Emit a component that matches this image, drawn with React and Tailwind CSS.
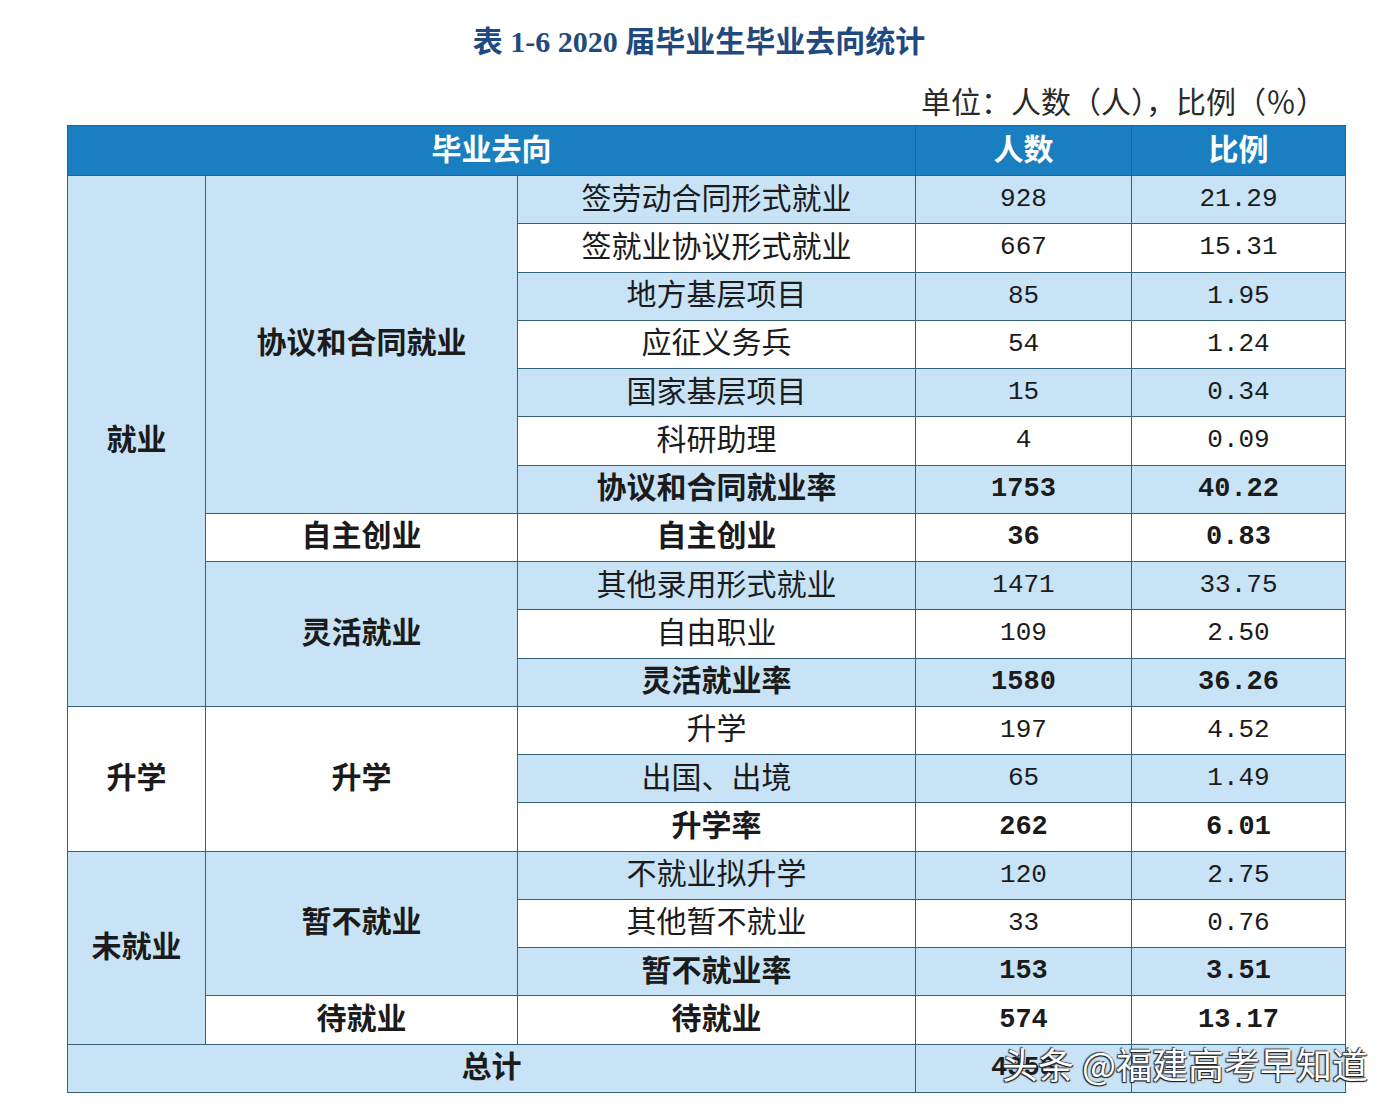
import React from 'react'

const BLUE = 'bg-[#c8e3f6]'
const WHITE = 'bg-white'

// col3 / count / ratio / bold
const rows = [
  ['签劳动合同形式就业', '928', '21.29', false],
  ['签就业协议形式就业', '667', '15.31', false],
  ['地方基层项目', '85', '1.95', false],
  ['应征义务兵', '54', '1.24', false],
  ['国家基层项目', '15', '0.34', false],
  ['科研助理', '4', '0.09', false],
  ['协议和合同就业率', '1753', '40.22', true],
  ['自主创业', '36', '0.83', true],
  ['其他录用形式就业', '1471', '33.75', false],
  ['自由职业', '109', '2.50', false],
  ['灵活就业率', '1580', '36.26', true],
  ['升学', '197', '4.52', false],
  ['出国、出境', '65', '1.49', false],
  ['升学率', '262', '6.01', true],
  ['不就业拟升学', '120', '2.75', false],
  ['其他暂不就业', '33', '0.76', false],
  ['暂不就业率', '153', '3.51', true],
  ['待就业', '574', '13.17', true],
]

// first column groups, keyed by starting row
const groups = {
  0: { label: '就业', span: 11, bg: BLUE },
  11: { label: '升学', span: 3, bg: WHITE },
  14: { label: '未就业', span: 4, bg: BLUE },
}

// second column groups
const subGroups = {
  0: { label: '协议和合同就业', span: 7, bg: BLUE },
  7: { label: '自主创业', span: 1, bg: WHITE },
  8: { label: '灵活就业', span: 3, bg: BLUE },
  11: { label: '升学', span: 3, bg: WHITE },
  14: { label: '暂不就业', span: 3, bg: BLUE },
  17: { label: '待就业', span: 1, bg: WHITE },
}

const cell = 'border-[1.5px] border-[#33627a] text-center align-middle p-0'
const cjk = "font-['Noto_Sans_CJK_SC',sans-serif] text-[30px] leading-[36px] pb-[8px]"
const mono = "font-['Liberation_Mono','Noto_Sans_CJK_SC',monospace]"

const App = () => {
  return (
    <div className="relative w-[1398px] h-[1110px] bg-white text-[#1b1b1b]">
      <h1 className="pt-[20px] text-center text-[30px] leading-[44px] font-bold text-[#1f4a80] font-['Liberation_Serif','Noto_Sans_CJK_SC',serif]">
        表 1-6 2020 届毕业生毕业去向统计
      </h1>
      <div className="mt-[16px] flex justify-end pr-[72px]">
        <p className="font-['Noto_Sans_CJK_SC',sans-serif] text-[30px] leading-[40px] text-[#2a2a2a]">单位：人数（人），比例（％）</p>
      </div>

      <div className="mt-[5px] ml-[67px]">
        <table className="border-collapse table-fixed w-[1278px]">
          <colgroup>
            <col className="w-[138px]" />
            <col className="w-[312px]" />
            <col className="w-[398px]" />
            <col className="w-[216px]" />
            <col className="w-[214px]" />
          </colgroup>
          <thead>
            <tr className="h-[50px] bg-[#1a7fc0] text-white">
              <th colSpan={3} className={`${cell} ${cjk} font-bold`}>毕业去向</th>
              <th className={`${cell} ${cjk} font-bold`}>人数</th>
              <th className={`${cell} ${cjk} font-bold`}>比例</th>
            </tr>
          </thead>
          <tbody>
            {rows.map(([name, count, ratio, bold], i) => {
              const bg = i % 2 === 0 ? BLUE : WHITE
              const weight = bold ? 'font-bold' : 'font-normal'
              const num = bold ? 'text-[27px]' : 'text-[26px]'
              return (
                <tr key={i} className="h-[48.25px]">
                  {groups[i] && (
                    <td rowSpan={groups[i].span} className={`${cell} ${groups[i].bg} ${cjk} font-bold`}>
                      {groups[i].label}
                    </td>
                  )}
                  {subGroups[i] && (
                    <td rowSpan={subGroups[i].span} className={`${cell} ${subGroups[i].bg} ${cjk} font-bold`}>
                      {subGroups[i].label}
                    </td>
                  )}
                  <td className={`${cell} ${bg} ${cjk} ${weight}`}>{name}</td>
                  <td className={`${cell} ${bg} ${mono} ${num} ${weight}`}>{count}</td>
                  <td className={`${cell} ${bg} ${mono} ${num} ${weight}`}>{ratio}</td>
                </tr>
              )
            })}
            <tr className="h-[48.25px]">
              <td colSpan={3} className={`${cell} ${BLUE} ${cjk} font-bold`}>总计</td>
              <td className={`${cell} ${BLUE} ${mono} text-[27px] font-bold`}>4358</td>
              <td className={`${cell} ${BLUE}`}></td>
            </tr>
          </tbody>
        </table>
      </div>

      {/* watermark over the total row */}
      <div
        className="absolute left-[1002px] top-[1039px] font-['Noto_Sans_CJK_SC',sans-serif] text-[36px] leading-[48px] text-white whitespace-nowrap [text-shadow:-1px_1px_1px_#222,1px_1px_1px_#222,-1px_-1px_1px_#444]"
      >
        头条 @福建高考早知道
      </div>
    </div>
  )
}

export default App
